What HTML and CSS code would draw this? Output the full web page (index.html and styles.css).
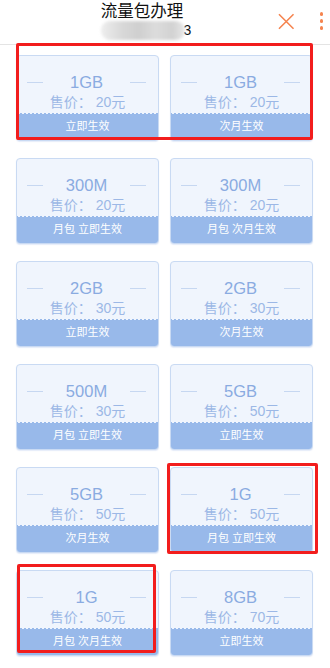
FILE: index.html
```html
<!DOCTYPE html>
<html lang="zh">
<head>
<meta charset="utf-8">
<title>流量包办理</title>
<link rel="stylesheet" href="styles.css">
</head>
<body>
<header class="header">
  <div class="titles">
    <div class="title">流量包办理</div>
    <div class="subtitle"><span class="blur"></span><span class="last">3</span></div>
  </div>
  <div class="actions">
    <svg class="close" width="17" height="17" viewBox="0 0 17 17"><path d="M1 1L16 16M16 1L1 16" stroke="#f5844f" stroke-width="1.6" fill="none"/></svg>
    <div class="more"><i></i><i></i><i></i></div>
  </div>
</header>
<main class="grid">
  <div class="card"><div class="body"><div class="size"><span class="dash"></span><span class="val">1GB</span><span class="dash"></span></div><div class="price">售价： 20元</div></div><div class="foot">立即生效</div></div>
  <div class="card"><div class="body"><div class="size"><span class="dash"></span><span class="val">1GB</span><span class="dash"></span></div><div class="price">售价： 20元</div></div><div class="foot">次月生效</div></div>
  <div class="card"><div class="body"><div class="size"><span class="dash"></span><span class="val">300M</span><span class="dash"></span></div><div class="price">售价： 20元</div></div><div class="foot">月包 立即生效</div></div>
  <div class="card"><div class="body"><div class="size"><span class="dash"></span><span class="val">300M</span><span class="dash"></span></div><div class="price">售价： 20元</div></div><div class="foot">月包 次月生效</div></div>
  <div class="card"><div class="body"><div class="size"><span class="dash"></span><span class="val">2GB</span><span class="dash"></span></div><div class="price">售价： 30元</div></div><div class="foot">立即生效</div></div>
  <div class="card"><div class="body"><div class="size"><span class="dash"></span><span class="val">2GB</span><span class="dash"></span></div><div class="price">售价： 30元</div></div><div class="foot">次月生效</div></div>
  <div class="card"><div class="body"><div class="size"><span class="dash"></span><span class="val">500M</span><span class="dash"></span></div><div class="price">售价： 30元</div></div><div class="foot">月包 立即生效</div></div>
  <div class="card"><div class="body"><div class="size"><span class="dash"></span><span class="val">5GB</span><span class="dash"></span></div><div class="price">售价： 50元</div></div><div class="foot">立即生效</div></div>
  <div class="card"><div class="body"><div class="size"><span class="dash"></span><span class="val">5GB</span><span class="dash"></span></div><div class="price">售价： 50元</div></div><div class="foot">次月生效</div></div>
  <div class="card"><div class="body"><div class="size"><span class="dash"></span><span class="val">1G</span><span class="dash"></span></div><div class="price">售价： 50元</div></div><div class="foot">月包 立即生效</div></div>
  <div class="card"><div class="body"><div class="size"><span class="dash"></span><span class="val">1G</span><span class="dash"></span></div><div class="price">售价： 50元</div></div><div class="foot">月包 次月生效</div></div>
  <div class="card"><div class="body"><div class="size"><span class="dash"></span><span class="val">8GB</span><span class="dash"></span></div><div class="price">售价： 70元</div></div><div class="foot">立即生效</div></div>
</main>
<div class="mark mark-1"></div>
<div class="mark mark-2"></div>
<div class="mark mark-3"></div>
</body>
</html>
```
FILE: styles.css
```css
* { box-sizing: border-box; }
html, body { margin: 0; padding: 0; }
body {
  width: 330px;
  height: 668px;
  overflow: hidden;
  background: #ffffff;
  font-family: "Liberation Sans", "Noto Sans CJK SC", sans-serif;
  position: relative;
}
.header {
  height: 45px;
  display: flex;
  border-bottom: 1px solid #e4e4e4;
}
.titles {
  flex: 1;
  padding-left: 6px;
  display: flex;
  flex-direction: column;
  align-items: center;
}
.title {
  font-size: 16.5px;
  line-height: 20px;
  margin-top: 1px;
  color: #111;
}
.subtitle {
  display: flex;
  align-items: center;
  height: 18px;
  font-size: 14px;
  color: #111;
  margin-left: 8px;
}
.blur {
  display: inline-block;
  width: 84px;
  height: 19px;
  border-radius: 9px;
  background: linear-gradient(90deg, #eeeeee 0%, #d8d8d8 25%, #cfcfcf 45%, #dcdcdc 65%, #d2d2d2 85%, #e8e8e8 100%);
  filter: blur(1.5px);
}
.last { line-height: 16px; margin-left: -1px; }
.actions {
  width: 52px;
  display: flex;
  align-items: center;
  padding-right: 7px;
  padding-bottom: 2px;
}
.close { display: block; }
.more {
  margin-left: 25px;
  display: flex;
  flex-direction: column;
  gap: 3.5px;
}
.more i {
  display: block;
  width: 3.5px;
  height: 3.5px;
  border-radius: 50%;
  background: #f5844f;
}
.grid {
  display: grid;
  grid-template-columns: 143px 143px;
  column-gap: 11px;
  row-gap: 17px;
  padding: 10px 0 0 16px;
}
.card {
  height: 86px;
  border: 1px solid #c9daf3;
  border-radius: 4px;
  background: #f0f5fd;
  overflow: hidden;
  display: flex;
  flex-direction: column;
  box-shadow: 0 1px 1px rgba(150, 180, 230, 0.25);
}
.body {
  height: 57px;
  padding-top: 17px;
}
.size {
  display: flex;
  align-items: center;
  padding: 0 12px 0 10px;
  height: 18px;
}
.dash {
  width: 16px;
  height: 1px;
  background: #c6d7f1;
}
.val {
  flex: 1;
  text-align: center;
  font-size: 16.5px;
  line-height: 18px;
  color: #8aabe1;
}
.price {
  text-align: center;
  font-size: 14px;
  line-height: 16px;
  color: #9cb8e6;
  margin-top: 3px;
}
.foot {
  flex: 1;
  position: relative;
  background: #98b9ea;
  color: #ffffff;
  font-size: 11px;
  text-align: center;
  line-height: 28px;
}
.foot::before {
  content: "";
  position: absolute;
  left: 0;
  right: 0;
  top: 0;
  height: 2px;
  background: radial-gradient(circle at 2px 0, #f0f5fd 1.7px, transparent 2.1px) 0 0 / 4px 2px repeat-x;
}
.mark {
  position: absolute;
  border: 3px solid #f21d1d;
  border-radius: 2px;
  pointer-events: none;
}
.mark-1 { left: 16px; top: 43px; width: 297px; height: 97px; }
.mark-2 { left: 167px; top: 463px; width: 151px; height: 91px; }
.mark-3 { left: 17px; top: 564px; width: 139px; height: 89px; }
```
